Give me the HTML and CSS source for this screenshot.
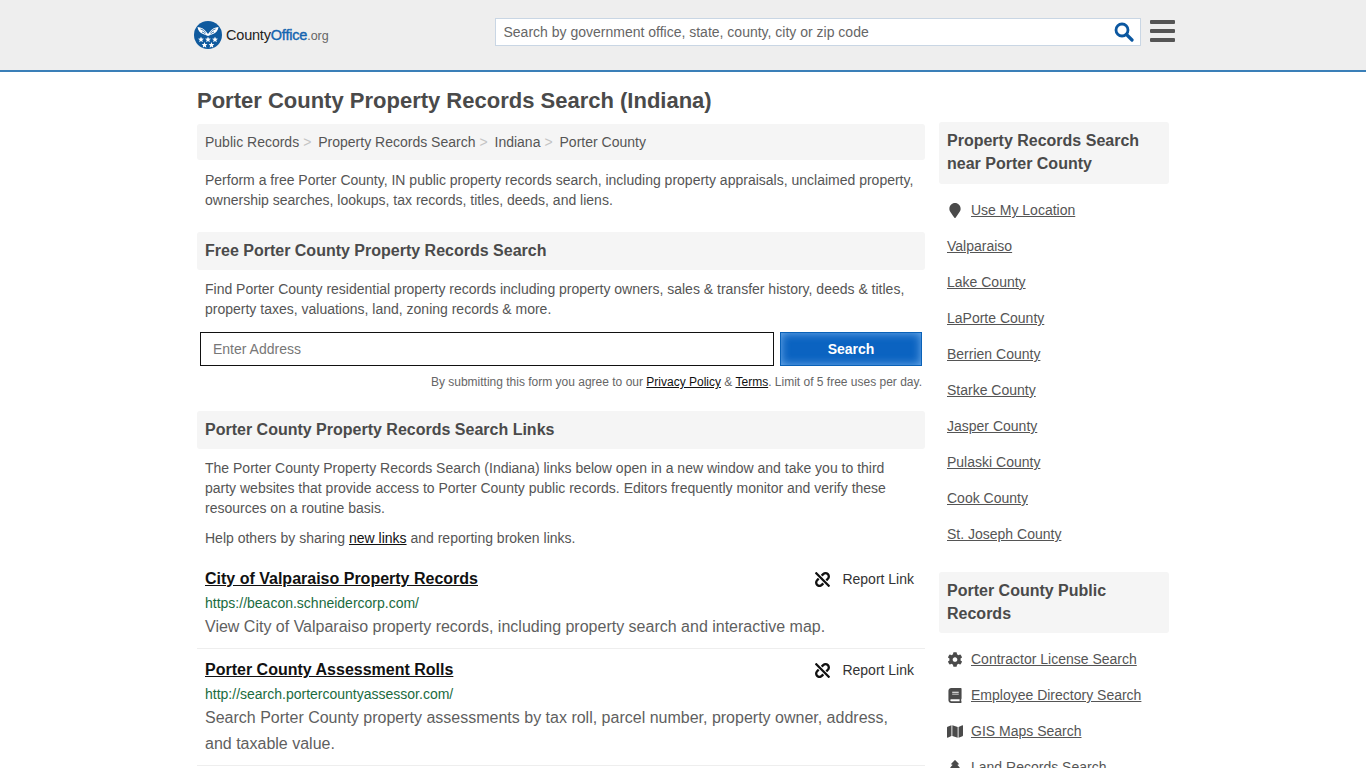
FILE: index.html
```html
<!DOCTYPE html>
<html lang="en">
<head>
  <meta charset="UTF-8">
  <title>Porter County Property Records Search (Indiana)</title>
  <meta name="viewport" content="width=device-width, initial-scale=1.0">
  <link rel="stylesheet" href="styles.css">
</head>
<body>

  <!-- Icons used more than once -->
  <svg class="defs" width="0" height="0">
    <symbol id="unlink" viewBox="0 0 512 512">
      <path d="M304.083 405.907c4.686 4.686 4.686 12.284 0 16.971l-44.674 44.674c-59.263 59.262-155.693 59.266-214.961 0-59.264-59.265-59.264-155.696 0-214.96l44.675-44.675c4.686-4.686 12.284-4.686 16.971 0l39.598 39.598c4.686 4.686 4.686 12.284 0 16.971l-44.675 44.674c-28.072 28.073-28.072 73.75 0 101.823 28.072 28.072 73.75 28.073 101.824 0l44.674-44.674c4.686-4.686 12.284-4.686 16.971 0l39.597 39.598zm-56.568-260.216c4.686 4.686 12.284 4.686 16.971 0l44.674-44.674c28.072-28.075 73.75-28.073 101.824 0 28.072 28.073 28.072 73.75 0 101.823l-44.675 44.674c-4.686 4.686-4.686 12.284 0 16.971l39.598 39.598c4.686 4.686 12.284 4.686 16.971 0l44.675-44.675c59.265-59.265 59.265-155.695 0-214.96-59.266-59.264-155.695-59.264-214.961 0l-44.674 44.674c-4.686 4.686-4.686 12.284 0 16.971l39.597 39.598zm234.828 359.28l22.627-22.627c9.373-9.373 9.373-24.569 0-33.941L63.598 7.029c-9.373-9.373-24.569-9.373-33.941 0L7.029 29.657c-9.373 9.373-9.373 24.569 0 33.941l441.373 441.373c9.373 9.372 24.569 9.372 33.941 0z" fill="#111"/>
    </symbol>
    <symbol id="star" viewBox="0 0 10 10">
      <path d="M5 0l1.300 3.400L10 3.700 7.100 6l1 3.700L5 7.600 1.900 9.700l1-3.700L0 3.700l3.700-.3z" fill="#fff"/>
    </symbol>
  </svg>

  <!-- Header -->
  <header class="site-header">
    <div class="header-inner">
      <a class="logo" href="#">
        <svg class="logo-mark" viewBox="0 0 28 28" width="28" height="28">
          <circle cx="14" cy="14" r="14" fill="#0f5a9e"/>
          <path d="M3.500 6c3.500.3 6.500 1.800 8.500 4.500l2 2.500 2-2.500c2-2.700 5-4.200 8.500-4.500-.5 3.500-2.500 6-5.500 7l-5 2-5-2C6 12 4 9.500 3.500 6z" fill="#fff"/>
          <path d="M6.500 8c2 .5 3.800 1.700 5 3.500M8 11c1.300.3 2.500 1 3.500 2M21.500 8c-2 .5-3.800 1.700-5 3.500M20 11c-1.300.3-2.500 1-3.500 2" stroke="#0f5a9e" stroke-width=".8" fill="none"/>
          <use href="#star" x="4" y="15.500" width="6" height="6"/>
          <use href="#star" x="11" y="15.500" width="6" height="6"/>
          <use href="#star" x="18" y="15.500" width="6" height="6"/>
          <use href="#star" x="7.500" y="21" width="6" height="6"/>
          <use href="#star" x="14.500" y="21" width="6" height="6"/>
        </svg>
        <span class="logo-text">County<b>Office</b><small>.org</small></span>
      </a>
      <form class="site-search">
        <input type="text" placeholder="Search by government office, state, county, city or zip code">
        <svg class="search-icon" viewBox="0 0 20 20" width="20" height="20">
          <circle cx="8" cy="8" r="6" fill="none" stroke="#0b57a0" stroke-width="2.8"/>
          <path d="M12.500 12.500 L18 18" stroke="#0b57a0" stroke-width="3.200" stroke-linecap="round"/>
        </svg>
      </form>
      <div class="burger"><span></span><span></span><span></span></div>
    </div>
  </header>

  <div class="page">
    <main class="main-col">
      <h1>Porter County Property Records Search (Indiana)</h1>

      <nav class="crumbs">
        <a href="#">Public Records</a><i>&gt;</i>
        <a href="#">Property Records Search</a><i>&gt;</i>
        <a href="#">Indiana</a><i>&gt;</i>
        <a href="#">Porter County</a>
      </nav>

      <p class="intro">Perform a free Porter County, IN public property records search, including property appraisals, unclaimed property, ownership searches, lookups, tax records, titles, deeds, and liens.</p>

      <h2 class="section-title">Free Porter County Property Records Search</h2>
      <p class="text">Find Porter County residential property records including property owners, sales &amp; transfer history, deeds &amp; titles, property taxes, valuations, land, zoning records &amp; more.</p>

      <form class="address-form">
        <input type="text" placeholder="Enter Address">
        <button type="button">Search</button>
      </form>
      <p class="terms">By submitting this form you agree to our <a href="#">Privacy Policy</a> &amp; <a href="#">Terms</a>. Limit of 5 free uses per day.</p>

      <h2 class="section-title links-title">Porter County Property Records Search Links</h2>
      <p class="text">The Porter County Property Records Search (Indiana) links below open in a new window and take you to third party websites that provide access to Porter County public records. Editors frequently monitor and verify these resources on a routine basis.</p>
      <p class="text share">Help others by sharing <a href="#">new links</a> and reporting broken links.</p>

      <div class="result">
        <div class="result-head">
          <a class="result-title" href="#">City of Valparaiso Property Records</a>
          <span class="report">
            <svg width="15" height="15"><use href="#unlink"/></svg>
            Report Link
          </span>
        </div>
        <div class="result-url">https://beacon.schneidercorp.com/</div>
        <p class="result-desc">View City of Valparaiso property records, including property search and interactive map.</p>
      </div>

      <div class="result">
        <div class="result-head">
          <a class="result-title" href="#">Porter County Assessment Rolls</a>
          <span class="report">
            <svg width="15" height="15"><use href="#unlink"/></svg>
            Report Link
          </span>
        </div>
        <div class="result-url">http://search.portercountyassessor.com/</div>
        <p class="result-desc">Search Porter County property assessments by tax roll, parcel number, property owner, address, and taxable value.</p>
      </div>
    </main>

    <aside class="side-col">
      <h3 class="side-title first">Property Records Search near Porter County</h3>
      <ul class="side-list">
        <li class="with-icon">
          <svg viewBox="0 0 384 512" width="16" height="15"><path d="M172.268 501.67C26.97 291.031 0 269.413 0 192 0 85.961 85.961 0 192 0s192 85.961 192 192c0 77.413-26.97 99.031-172.268 309.67-9.535 13.851-29.93 13.85-39.464 0z" fill="#4a4a4a"/></svg>
          <a href="#">Use My Location</a>
        </li>
        <li><a href="#">Valparaiso</a></li>
        <li><a href="#">Lake County</a></li>
        <li><a href="#">LaPorte County</a></li>
        <li><a href="#">Berrien County</a></li>
        <li><a href="#">Starke County</a></li>
        <li><a href="#">Jasper County</a></li>
        <li><a href="#">Pulaski County</a></li>
        <li><a href="#">Cook County</a></li>
        <li><a href="#">St. Joseph County</a></li>
      </ul>

      <h3 class="side-title second">Porter County Public Records</h3>
      <ul class="side-list">
        <li class="with-icon">
          <svg viewBox="0 0 512 512" width="16" height="15"><path d="M487.4 315.7l-42.6-24.6c4.3-23.2 4.3-47 0-70.2l42.6-24.6c4.9-2.8 7.1-8.6 5.5-14-11.1-35.6-30-67.8-54.7-94.6-3.8-4.1-10-5.1-14.8-2.3L380.8 110c-17.9-15.4-38.5-27.3-60.8-35.1V25.8c0-5.6-3.9-10.5-9.4-11.7-36.7-8.2-74.3-7.8-109.2 0-5.5 1.2-9.4 6.1-9.4 11.7V75c-22.2 7.9-42.8 19.8-60.8 35.1L88.7 85.5c-4.9-2.8-11-1.9-14.8 2.3-24.7 26.7-43.6 58.9-54.7 94.6-1.7 5.4.6 11.2 5.5 14L67.3 221c-4.3 23.2-4.3 47 0 70.2l-42.6 24.6c-4.9 2.8-7.1 8.6-5.5 14 11.1 35.6 30 67.8 54.7 94.6 3.8 4.1 10 5.1 14.8 2.3l42.6-24.6c17.9 15.4 38.5 27.3 60.8 35.1v49.2c0 5.6 3.9 10.5 9.4 11.7 36.7 8.2 74.3 7.8 109.2 0 5.5-1.2 9.4-6.1 9.4-11.7v-49.2c22.2-7.9 42.8-19.8 60.8-35.1l42.6 24.6c4.9 2.8 11 1.9 14.8-2.3 24.7-26.7 43.6-58.9 54.7-94.6 1.5-5.5-.7-11.3-5.6-14.1zM256 336c-44.1 0-80-35.9-80-80s35.9-80 80-80 80 35.900 80 80-35.900 80-80 80z" fill="#4a4a4a"/></svg>
          <a href="#">Contractor License Search</a>
        </li>
        <li class="with-icon">
          <svg viewBox="0 0 448 512" width="16" height="15"><path d="M448 360V24c0-13.3-10.7-24-24-24H96C43 0 0 43 0 96v320c0 53 43 96 96 96h328c13.3 0 24-10.7 24-24v-16c0-7.500-3.500-14.300-8.900-18.700-4.200-15.400-4.200-59.300 0-74.700 5.400-4.300 8.900-11.100 8.900-18.600zM128 134c0-3.300 2.700-6 6-6h212c3.300 0 6 2.700 6 6v20c0 3.300-2.700 6-6 6H134c-3.300 0-6-2.700-6-6v-20zm0 64c0-3.300 2.700-6 6-6h212c3.300 0 6 2.700 6 6v20c0 3.300-2.700 6-6 6H134c-3.300 0-6-2.700-6-6v-20zm253.400 250H96c-17.700 0-32-14.300-32-32 0-17.600 14.400-32 32-32h285.400c-1.900 17.100-1.900 46.900 0 64z" fill="#4a4a4a"/></svg>
          <a href="#">Employee Directory Search</a>
        </li>
        <li class="with-icon">
          <svg viewBox="0 0 576 512" width="16" height="15"><path d="M0 117.66v346.32c0 11.32 11.43 19.06 21.94 14.86L160 416V32L20.12 87.95A32.006 32.006 0 0 0 0 117.66zM192 416l192 64V96L192 32v384zM554.06 33.16L416 96v384l139.88-55.95A31.996 31.996 0 0 0 576 394.34V48.02c0-11.32-11.43-19.06-21.94-14.86z" fill="#4a4a4a"/></svg>
          <a href="#">GIS Maps Search</a>
        </li>
        <li class="with-icon">
          <svg viewBox="0 0 384 512" width="16" height="15"><path d="M378.31 378.49L298.42 288h30.63c9.01 0 16.98-5 20.78-13.06 3.8-8.04 2.55-17.26-3.28-24.05L268.42 160h28.89c9.1 0 17.3-5.35 20.86-13.61 3.52-8.13 1.86-17.59-4.24-24.08L203.66 4.83c-6.03-6.45-17.28-6.45-23.32 0L70.06 122.31c-6.1 6.49-7.75 15.95-4.24 24.08C69.38 154.65 77.59 160 86.69 160h28.89l-78.14 90.91c-5.81 6.78-7.06 15.99-3.27 24.04C37.97 283 45.93 288 54.95 288h30.63L5.69 378.49c-6 6.79-7.36 16.09-3.56 24.26 3.75 8.05 12 13.25 21 13.25H160v24.45l-30.29 48.4c-5.32 10.64 2.42 23.16 14.31 23.16h95.96c11.89 0 19.63-12.52 14.31-23.16L224 440.45V416h136.87c9 0 17.25-5.2 21-13.25 3.8-8.17 2.44-17.47-3.56-24.26z" fill="#4a4a4a"/></svg>
          <a href="#">Land Records Search</a>
        </li>
      </ul>
    </aside>
  </div>

</body>
</html>
```

FILE: styles.css
```css
:root {
  --text: #555;
  --heading: #4a4a4a;
  --panel: #f5f5f5;
}

html, body {
  overflow: hidden;
  height: 100%;
}

body {
  margin: 0;
  font-family: "Liberation Sans", Arial, sans-serif;
  font-size: 14px;
  color: var(--text);
  background: #fff;
}

a {
  color: inherit;
}

.defs {
  position: absolute;
}

/* Header */
.site-header {
  height: 70px;
  background: #eeeeee;
  border-bottom: 2px solid #3a7fb8;
}

.header-inner {
  width: 982px;
  margin: 0 0 0 194px;
  display: flex;
  align-items: flex-start;
}

.logo {
  display: flex;
  align-items: center;
  margin-top: 21px;
  width: 301px;
  text-decoration: none;
  color: #222;
}

.logo-mark {
  flex: none;
}

.logo-text {
  margin-left: 4px;
  font-size: 14.5px;
  letter-spacing: -0.2px;
}

.logo-text b {
  font-weight: normal;
  color: #1565b0;
  -webkit-text-stroke: 0.4px #1565b0;
}

.logo-text small {
  font-size: 12.5px;
  color: #666;
  letter-spacing: 0;
}

.site-search {
  width: 644px;
  height: 26px;
  margin-top: 18px;
  display: flex;
  align-items: center;
  background: #fff;
  border: 1px solid #c9d6e4;
}

.site-search input {
  flex: 1;
  min-width: 0;
  height: 100%;
  padding: 0 0 0 7.5px;
  border: none;
  outline: none;
  background: transparent;
  font: 14px "Liberation Sans", Arial, sans-serif;
}

.site-search input::placeholder {
  color: #666;
  opacity: 1;
}

.search-icon {
  margin-right: 6px;
  flex: none;
}

.burger {
  margin: 20px 0 0 9px;
  width: 25px;
  display: flex;
  flex-direction: column;
  gap: 5px;
}

.burger span {
  height: 4px;
  border-radius: 1px;
  background: #555;
}

/* Page columns */
.page {
  width: 972px;
  margin-left: 197px;
  display: flex;
  gap: 14px;
}

.main-col {
  width: 728px;
  flex: none;
}

.side-col {
  width: 230px;
  flex: none;
  padding-top: 50px;
}

h1 {
  margin: 0;
  padding-top: 16px;
  height: 36px;
  font-size: 22px;
  line-height: 26px;
  color: var(--heading);
}

.crumbs {
  height: 36px;
  line-height: 36px;
  padding-left: 8px;
  background: var(--panel);
  border-radius: 3px;
}

.crumbs a {
  text-decoration: none;
}

.crumbs i {
  margin: 0 3px 0 4px;
  font-style: normal;
  color: #c4c4c4;
}

.intro, .text {
  margin: 0;
  padding: 0 8px;
  line-height: 20px;
}

.intro {
  margin-top: 10px;
}

.section-title {
  margin: 22px 0 0;
  height: 38px;
  padding-left: 8px;
  line-height: 38px;
  font-size: 16px;
  color: var(--heading);
  background: var(--panel);
  border-radius: 3px;
}

.section-title + .text {
  margin-top: 9px;
}

.share {
  margin-top: 10px;
}

.share a {
  color: #111;
}

.address-form {
  display: flex;
  gap: 6px;
  margin: 13px 3px 0;
}

.address-form input {
  flex: 1;
  height: 34px;
  box-sizing: border-box;
  padding: 0 12px;
  border: 1px solid #111;
  outline: none;
  font: 14px "Liberation Sans", Arial, sans-serif;
}

.address-form input::placeholder {
  color: #777;
  opacity: 1;
}

.address-form button {
  width: 142px;
  height: 34px;
  border: 1px solid #0a62b8;
  background: #0b63c1;
  box-shadow: inset 0 0 10px rgba(150, 200, 250, 0.75);
  color: #fff;
  font: bold 14px "Liberation Sans", Arial, sans-serif;
}

.terms {
  margin: 9px 3px 0 0;
  text-align: right;
  font-size: 12px;
  line-height: 14px;
  color: #666;
}

.terms a {
  color: #111;
}

/* Link results */
.result {
  padding: 0 8px 8px;
  border-bottom: 1px solid #eee;
}

.share + .result {
  margin-top: 17px;
}

.result + .result {
  padding-top: 7px;
}

.result-head {
  display: flex;
  justify-content: space-between;
  align-items: center;
  height: 28px;
}

.result-title {
  font-size: 16px;
  font-weight: bold;
  color: #111;
}

.report {
  display: flex;
  align-items: center;
  gap: 12px;
  padding-right: 3px;
  color: #333;
}

.result-url {
  margin-top: 1px;
  line-height: 18px;
  color: #1a6b3e;
}

.result-desc {
  margin: 2px 0 0;
  font-size: 16px;
  line-height: 26px;
  color: #5f5f5f;
}

/* Sidebar */
.side-title {
  margin: 0;
  padding: 7px 8px 8px;
  font-size: 16px;
  line-height: 23px;
  color: var(--heading);
  background: var(--panel);
  border-radius: 3px;
}

.side-title.first {
  padding-bottom: 9px;
}

.side-title.second {
  margin-top: 20px;
}

.side-list {
  list-style: none;
  margin: 0;
  padding: 8px 0 0 8px;
}

.side-list li {
  height: 36px;
  line-height: 36px;
  display: flex;
  align-items: center;
  white-space: nowrap;
}

.with-icon svg {
  flex: none;
  margin-right: 8px;
}
```
